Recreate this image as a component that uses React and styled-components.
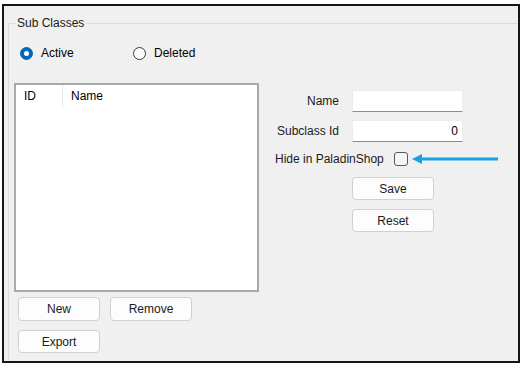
import styled, { createGlobalStyle } from "styled-components";

const Global = createGlobalStyle`
  body {
    margin: 0;
    background: #ffffff;
    font-family: "Liberation Sans", Arial, sans-serif;
    font-size: 12px;
    color: #000;
  }
`;

const Frame = styled.div`
  margin: 4px 0 0 2px;
  width: 514px;
  height: 355px;
  border: 2px solid #161616;
  background: #f0f0f0;
  overflow: hidden;
`;

const Group = styled.fieldset`
  margin: 10px 0 0 4px;
  padding: 0;
  height: 360px;
  border: 1px solid #dcdcdc;
  border-right: none;
  border-bottom: none;
  min-inline-size: 0;
`;

const Legend = styled.legend`
  margin-left: 6px;
  padding: 0 2px;
  line-height: 15px;
  color: #1a1a1a;
`;

const Body = styled.div`
  display: flex;
  padding-left: 5px;
`;

const LeftCol = styled.div`
  width: 245px;
  display: flex;
  flex-direction: column;
`;

const RadioRow = styled.div`
  display: flex;
  align-items: center;
  height: 16px;
  margin-top: 14px;
  padding-left: 6px;
`;

const RadioOption = styled.label`
  display: flex;
  align-items: center;
  gap: 8px;
  width: ${(p) => p.$width || "auto"};
  line-height: 15px;
`;

const RadioDot = styled.span`
  box-sizing: border-box;
  width: 13px;
  height: 13px;
  border-radius: 50%;
  display: flex;
  align-items: center;
  justify-content: center;
  background: ${(p) => (p.$checked ? "#0067c0" : "#fafafa")};
  border: 1px solid ${(p) => (p.$checked ? "#0067c0" : "#3a3a3a")};
  &::after {
    content: "";
    display: ${(p) => (p.$checked ? "block" : "none")};
    width: 5px;
    height: 5px;
    border-radius: 50%;
    background: #fff;
  }
`;

const ListBox = styled.div`
  box-sizing: border-box;
  margin-top: 22px;
  width: 245px;
  height: 209px;
  border: 2px solid #a9a9a9;
  background: #fff;
`;

const ListHeader = styled.div`
  display: flex;
  height: 22px;
  align-items: stretch;
`;

const HeaderCell = styled.div`
  display: flex;
  align-items: center;
  padding-left: 8px;
  width: ${(p) => p.$width || "auto"};
  flex: ${(p) => (p.$width ? "none" : "1")};
  border-right: ${(p) => (p.$width ? "1px solid #e5e5e5" : "none")};
`;

const ButtonRow = styled.div`
  display: flex;
  gap: 10px;
  padding-left: 4px;
  margin-top: ${(p) => p.$top || "0"};
`;

const Button = styled.button`
  box-sizing: border-box;
  width: 82px;
  height: ${(p) => p.$h || "24px"};
  background: #fdfdfd;
  border: 1px solid #d0d0d0;
  border-radius: 4px;
  font-family: "Liberation Sans", Arial, sans-serif;
  font-size: 12px;
  color: #1a1a1a;
  padding: 0;
`;

const RightCol = styled.div`
  margin-left: 11px;
  padding-top: 59px;
  display: flex;
  flex-direction: column;
`;

const FieldRow = styled.div`
  display: flex;
  align-items: center;
  gap: 13px;
  height: 22px;
  margin-bottom: 8px;
`;

const Label = styled.span`
  width: 69px;
  text-align: right;
  color: #1a1a1a;
`;

const Input = styled.input`
  box-sizing: border-box;
  width: 111px;
  height: 22px;
  border: 1px solid #ececec;
  border-bottom: 1px solid #8c8c8c;
  background: #fff;
  font-family: "Liberation Sans", Arial, sans-serif;
  font-size: 12px;
  text-align: ${(p) => (p.$right ? "right" : "left")};
  padding: 0 4px;
  outline: none;
`;

const CheckRow = styled.div`
  display: flex;
  align-items: center;
  height: 17px;
  padding-left: 5px;
  color: #1a1a1a;
`;

const CheckBox = styled.span`
  box-sizing: border-box;
  width: 14px;
  height: 14px;
  margin-left: 10px;
  border: 1px solid #5a5a5a;
  border-radius: 3px;
  background: #f6f6f6;
`;

const Arrow = styled.svg`
  margin-left: 4px;
  display: block;
`;

const SideButton = styled(Button)`
  margin-left: 82px;
  margin-top: ${(p) => p.$top};
`;

export default function App() {
  return (
    <>
      <Global />
      <Frame>
        <Group>
          <Legend>Sub Classes</Legend>
          <Body>
            <LeftCol>
              <RadioRow>
                <RadioOption $width="113px">
                  <RadioDot $checked />
                  Active
                </RadioOption>
                <RadioOption>
                  <RadioDot />
                  Deleted
                </RadioOption>
              </RadioRow>
              <ListBox>
                <ListHeader>
                  <HeaderCell $width="38px">ID</HeaderCell>
                  <HeaderCell>Name</HeaderCell>
                </ListHeader>
              </ListBox>
              <ButtonRow $top="5px">
                <Button>New</Button>
                <Button>Remove</Button>
              </ButtonRow>
              <ButtonRow $top="9px">
                <Button $h="23px">Export</Button>
              </ButtonRow>
            </LeftCol>
            <RightCol>
              <FieldRow>
                <Label>Name</Label>
                <Input defaultValue="" />
              </FieldRow>
              <FieldRow>
                <Label>Subclass Id</Label>
                <Input $right defaultValue="0" />
              </FieldRow>
              <CheckRow>
                Hide in PaladinShop
                <CheckBox />
                <Arrow width="86" height="12" viewBox="0 0 86 12">
                  <polygon points="0,6 10,1 10,11" fill="#17a2e3" />
                  <line x1="8" y1="6" x2="86" y2="6" stroke="#17a2e3" strokeWidth="3" />
                </Arrow>
              </CheckRow>
              <SideButton $h="23px" $top="10px">Save</SideButton>
              <SideButton $h="23px" $top="9px">Reset</SideButton>
            </RightCol>
          </Body>
        </Group>
      </Frame>
    </>
  );
}
